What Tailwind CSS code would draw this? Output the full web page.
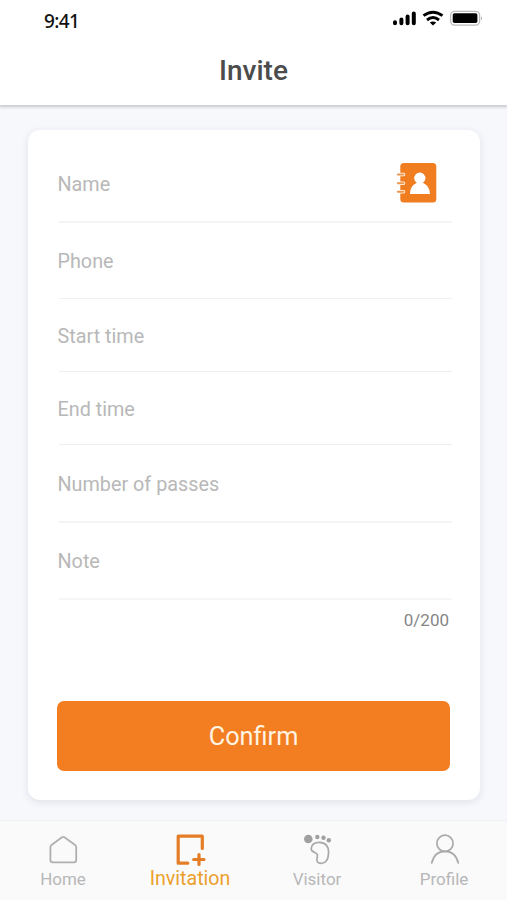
<!DOCTYPE html>
<html lang="en">
<head>
<meta charset="utf-8">
<title>Invite</title>
<script src="https://cdn.jsdelivr.net/npm/@tailwindcss/browser@4"></script>
</head>
<body class="w-[507px] h-[900px] overflow-hidden bg-[#f7f8fc] font-['Roboto',sans-serif] flex flex-col">
  <header class="relative h-[105px] shrink-0 bg-white shadow-[0_1px_3px_1px_rgba(0,0,0,0.2)]">
    <div class="flex h-10 items-center justify-between pl-11 pr-6">
      <span class="pt-0.5 font-['Noto_Sans',sans-serif] text-[19px] leading-6 font-medium tracking-[-0.6px] text-[#111]">9:41</span>
      <svg class="mt-[-4px]" width="91" height="18" viewBox="392 9 91 18">
        <g stroke="#000" stroke-width="4" stroke-linecap="round">
          <path d="M395 22.2V23.2M401.4 19.6V23.2M407.6 16.5V23.2M413.8 13.5V23.2"/>
        </g>
        <g fill="none" stroke="#000" stroke-width="2.9">
          <path d="M423.5 15.7Q433 8.7 442.5 15.7"/>
          <path d="M427 20Q433 15.2 439 20"/>
        </g>
        <path d="M429.8 22.6Q433 20.2 436.2 22.6L433 25.6Z"/>
        <rect x="450.6" y="11.3" width="29" height="13.8" rx="4" fill="#fff" stroke="#bbb" stroke-width="1.3"/>
        <rect x="452.7" y="13.3" width="24.7" height="9.8" rx="1.8"/>
        <path d="M481 16.3Q483 18.2 481 20.2Z" fill="#aaa"/>
      </svg>
    </div>
    <h1 class="pt-[15px] text-center text-[28px] leading-8 font-medium text-[#4c4c4c]">Invite</h1>
  </header>

  <main class="flex-1 pt-[25px] pl-7 pr-[27px]">
    <section class="flex h-[670px] flex-col rounded-xl bg-white pl-[31px] pr-7 shadow-[0_2px_7px_1px_rgba(40,45,80,0.09)] text-[19.8px] leading-6 text-[#b8b8b8]">
      <div class="flex h-[93px] items-end justify-between border-b-2 border-[#f4f4f4] pb-[24px]">
        <span class="-ml-[1.5px]">Name</span>
        <svg class="mr-[14px] mb-[-7px]" width="42" height="42" viewBox="396 162 42 42">
          <rect x="400.3" y="163" width="36" height="39.5" rx="3.5" fill="#f07d20"/>
          <g stroke-linecap="round">
            <path d="M398 174.5H403.5M398 183.2H403.5M398 191.8H403.5" stroke="#fff" stroke-width="3.6"/>
            <path d="M397.8 174.5H403.5M397.8 183.2H403.5M397.8 191.8H403.5" stroke="#ee964b" stroke-width="1.9"/>
          </g>
          <path d="M410 194Q409.500 186.500 416.700 182.800A5.600 5.600 0 1 1 422.900 182.800Q430.200 186.500 430 194Z" fill="#fff"/>
        </svg>
      </div>
      <div class="flex h-[76px] items-end border-b border-[#f0f0f0] pb-[24px]"><span class="-ml-[1.5px]">Phone</span></div>
      <div class="flex h-[73px] items-end border-b border-[#eeeeee] pb-[22px]"><span class="-ml-[1.5px]">Start time</span></div>
      <div class="flex h-[73px] items-end border-b border-[#eeeeee] pb-[22px]"><span class="-ml-[1.5px]">End time</span></div>
      <div class="flex h-[78px] items-end border-b-2 border-[#f4f4f4] pb-[24px]"><span class="-ml-[1.5px]">Number of passes</span></div>
      <div class="flex h-[77px] items-end border-b-2 border-[#f6f6f6] pb-[24px]"><span class="-ml-[1.5px]">Note</span></div>
      <div class="pt-2 pr-[3px] text-right text-[17px] text-[#868686]">0/200</div>
      <button class="mt-auto -ml-0.5 mr-0.5 mb-[29px] h-[70px] rounded-[7px] bg-[#f27e21] pt-0.5 text-[25.3px] text-[#fff3e2]">Confirm</button>
    </section>
  </main>

  <nav class="flex h-20 shrink-0 border-t border-[#f1f2f6] bg-[#fafafb] text-[17px] leading-5 text-[#b7b7b7]">
    <div class="flex w-[126px] flex-col items-center pt-[12px]">
      <svg width="36" height="36" viewBox="45 833 36 36" fill="none" stroke="#b0b0b0" stroke-width="1.8" stroke-linejoin="round"><path d="M51.800 844.700L62 837.300Q63.200 836.500 64.400 837.300L74.800 844.700Q76.200 845.700 76.200 847V860Q76.200 862.300 74 862.300H52.700Q50.400 862.300 50.400 860V847Q50.400 845.700 51.800 844.700Z"/></svg>
      <span>Home</span>
    </div>
    <div class="flex w-[128px] flex-col items-center pt-[12px] text-[#eba02b]">
      <svg width="36" height="36" viewBox="172 833 36 36" fill="none" stroke="#e57d26" stroke-width="3.200" stroke-linecap="round" stroke-linejoin="round"><path d="M202.300 848.500V836.200H178.200V863.200H187.800"/><path d="M199 854.500V864.500M193.700 859.500H204" stroke-width="3.200"/></svg>
      <span class="text-[19.6px]">Invitation</span>
    </div>
    <div class="flex w-[126px] flex-col items-center pt-[12px]">
      <svg width="36" height="36" viewBox="299 833 36 36"><g fill="#a0a0a0"><circle cx="308.300" cy="839" r="4.300"/><circle cx="317.300" cy="837" r="2.200"/><circle cx="323.500" cy="837.800" r="2.200"/><circle cx="328.800" cy="840.300" r="2.200"/></g><path d="M311.200 848.500C311.500 844.500 315 842.300 319.500 842.300C325.500 842.300 328.800 846.500 328.600 852.500C328.400 859 326.300 863.400 321.200 863.400C317.800 863.400 316.200 861.200 317 858.300C317.700 855.500 318 853.800 315.200 852.700C312.500 851.700 311 850.800 311.200 848.500Z" fill="none" stroke="#a8a8a8" stroke-width="1.700"/></svg>
      <span>Visitor</span>
    </div>
    <div class="flex w-[127px] flex-col items-center pt-[12px]">
      <svg width="36" height="36" viewBox="426 833 36 36" fill="none" stroke="#aaa" stroke-width="1.700" stroke-linecap="round"><circle cx="445" cy="843.300" r="8.100"/><path d="M431.700 863C433.500 855.500 438.500 851.400 445 851.400C451.500 851.400 456.500 855.500 458.300 863"/></svg>
      <span class="pl-px">Profile</span>
    </div>
  </nav>
</body>
</html>
